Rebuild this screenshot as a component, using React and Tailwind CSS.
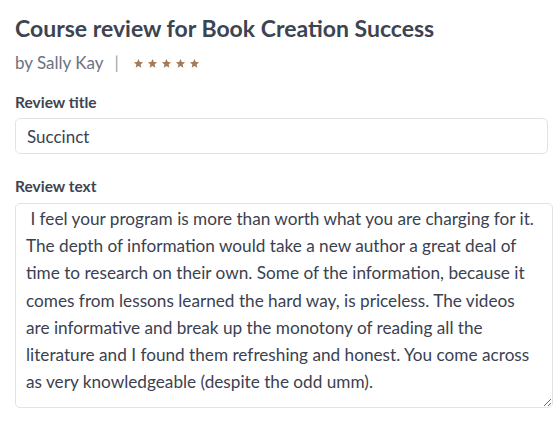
import React from "react";

function Star() {
  return (
    <svg width="11" height="11" viewBox="0 0 24 24" fill="#a47a58">
      <path d="M12 2l2.9 6.6 7.1.7-5.4 4.8 1.6 7-6.2-3.7-6.2 3.7 1.6-7L2 9.3l7.1-.7z" />
    </svg>
  );
}

const text =
  " I feel your program is more than worth what you are charging for it. The depth of information would take a new author a great deal of time to research on their own. Some of the information, because it comes from lessons learned the hard way, is priceless. The videos are informative and break up the monotony of reading all the literature and I found them refreshing and honest. You come across as very knowledgeable (despite the odd umm).";

export default function App() {
  return (
    <div className="w-[555px] h-[423px] bg-white pl-[15px] pr-[2px] pt-[13px] text-[#3b4150]" style={{ fontFamily: "Lato, sans-serif" }}>
      <h1 className="text-[23px] font-bold leading-[30px] text-[#3c4452]">Course review for Book Creation Success</h1>
      <div className="flex items-center mt-[8px] text-[17px] text-[#6b7280] leading-[24px]">
        <span>by Sally Kay</span>
        <span className="ml-[11px] mr-[14px] text-[#9ca3af]">|</span>
        <div className="flex gap-[3px]">
          <Star /><Star /><Star /><Star /><Star />
        </div>
      </div>
      <label className="block mt-[17px] text-[15.5px] font-bold text-[#3c4452] leading-[20px]">Review title</label>
      <input
        className="block mt-[6px] w-[533px] h-[36px] rounded-[5px] border border-[#e3e3e3] px-[11px] text-[17px] text-[#3b4150] outline-none"
        defaultValue="Succinct"
        style={{ fontFamily: "Lato, sans-serif" }}
      />
      <label className="block mt-[22px] text-[15.5px] font-bold text-[#3c4452] leading-[20px]">Review text</label>
      <textarea
        className="block mt-[7px] w-[538px] h-[205px] rounded-[5px] border border-[#e3e3e3] pl-[10px] pr-[14px] pt-[1px] text-[17.2px] leading-[27.2px] text-[#3b4150] outline-none resize-y"
        defaultValue={text}
        style={{ fontFamily: "Lato, sans-serif" }}
      />
    </div>
  );
}
